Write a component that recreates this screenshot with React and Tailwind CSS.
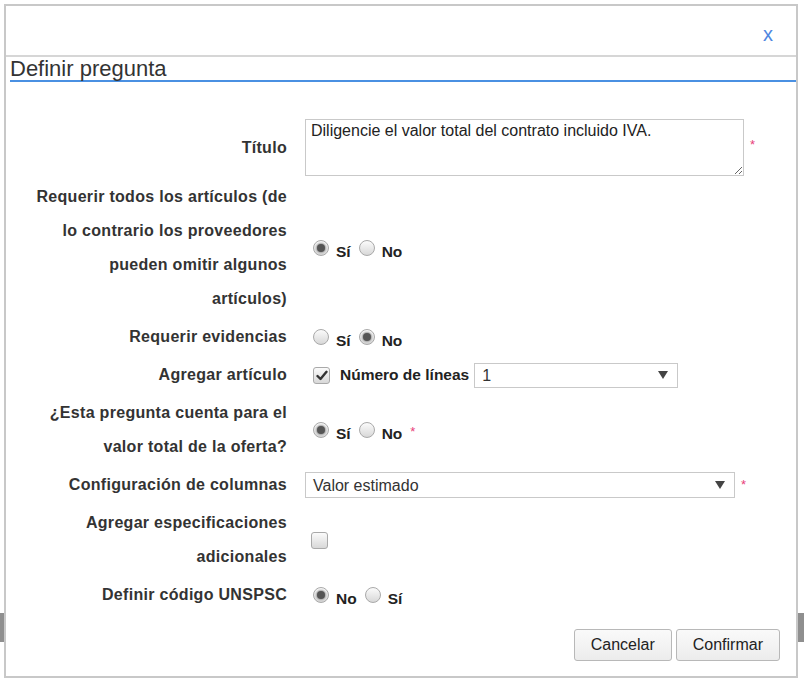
import React from 'react';

const font = "font-['Liberation_Sans',Arial,sans-serif]";

function Radio({ checked }) {
    return (
        <span className="w-[16px] h-[16px] shrink-0 rounded-full border border-[#a9a9a9] bg-linear-to-b from-[#fbfbfb] to-[#d8d8d8] flex items-center justify-center">
            {checked && <span className="w-[8px] h-[8px] rounded-full bg-[#555] shadow-[0_0_2px_1px_#9a9a9a]" />}
        </span>
    );
}

function Checkbox({ checked }) {
    return (
        <span className="w-[17px] h-[17px] shrink-0 rounded-[3px] border border-[#a9a9a9] bg-linear-to-b from-[#fbfbfb] to-[#d8d8d8] flex items-center justify-center">
            {checked && (
                <svg width="12" height="11" viewBox="0 0 12 11">
                    <path d="M1.5 6 L4.5 9 L10.5 1.8" fill="none" stroke="#333" strokeWidth="2.4" strokeLinecap="round" strokeLinejoin="round" />
                </svg>
            )}
        </span>
    );
}

function Required({ className = '' }) {
    return <span className={`text-[#e8407a] text-[13px] leading-none ${className}`}>*</span>;
}

function Choices({ options, value, required }) {
    return (
        <div className="flex items-center ml-[8px]">
            {options.map((o) => (
                <React.Fragment key={o}>
                    <Radio checked={o === value} />
                    <span className="ml-[7px] mr-[8px] mt-[7px] font-bold text-[15.5px] text-[#222]">{o}</span>
                </React.Fragment>
            ))}
            {required && <Required className="mt-[2px]" />}
        </div>
    );
}

function Select({ value, width, height }) {
    return (
        <div className={`flex items-center justify-between border border-[#c9c9c9] bg-white pl-[7px] pr-[9px] ${width} ${height}`}>
            <span className="text-[16px] text-[#333] mt-[2px]">{value}</span>
            <svg width="10" height="8" viewBox="0 0 10 8">
                <path d="M0 0 H10 L5 8 Z" fill="#444" />
            </svg>
        </div>
    );
}

function Label({ children }) {
    return (
        <div className="text-right font-bold text-[16px] tracking-[0.3px] leading-[34px] text-[#333] flex flex-col justify-center">
            {children}
        </div>
    );
}

export default function App() {
    return (
        <div className={`relative w-[804px] h-[683px] bg-white overflow-hidden ${font}`}>
            {/* page behind the dialog */}
            <div className="absolute left-0 top-[613px] w-[5px] h-[29px] bg-[#8f8f8f]" />
            <div className="absolute right-0 top-[613px] w-[7px] h-[29px] bg-[#8f8f8f]" />

            <div className="relative ml-[4px] mt-[4px] w-[794px] h-[674px] border-2 border-[#c8c8c8] bg-white flex flex-col">
                {/* header */}
                <div className="h-[49px] flex items-center justify-end pr-[23px] pt-[6px]">
                    <span className="text-[20px] text-[#4f86df] leading-none">x</span>
                </div>
                <div className="h-[2px] bg-[#d6d6d6]" />

                <div className="ml-[4px] mt-[1px] border-b-2 border-[#4a90e2]">
                    <h2 className="text-[22px] leading-[22px] text-[#333]">Definir pregunta</h2>
                </div>

                {/* form */}
                <div className="grid grid-cols-[281px_1fr] gap-x-[18px] gap-y-[4px] pt-[37px]">
                    <Label>Título</Label>
                    <div className="flex items-center">
                        <textarea
                            readOnly
                            defaultValue="Diligencie el valor total del contrato incluido IVA."
                            className="w-[439px] h-[57px] border border-[#c9c9c9] px-[5px] pt-[2px] text-[16px] leading-[18px] text-[#222] outline-none"
                        />
                        <Required className="ml-[6px] -mt-[6px]" />
                    </div>

                    <Label>
                        Requerir todos los artículos (de<br />
                        lo contrario los proveedores<br />
                        pueden omitir algunos<br />
                        artículos)
                    </Label>
                    <div className="flex items-center">
                        <Choices options={['Sí', 'No']} value="Sí" />
                    </div>

                    <Label>Requerir evidencias</Label>
                    <div className="flex items-center">
                        <Choices options={['Sí', 'No']} value="No" />
                    </div>

                    <Label>Agregar artículo</Label>
                    <div className="flex items-center">
                        <span className="ml-[8px]"><Checkbox checked /></span>
                        <span className="ml-[10px] mr-[5px] font-bold text-[15.5px] text-[#222]">Número de líneas</span>
                        <Select value="1" width="w-[204px]" height="h-[25px]" />
                    </div>

                    <Label>
                        ¿Esta pregunta cuenta para el<br />
                        valor total de la oferta?
                    </Label>
                    <div className="flex items-center">
                        <Choices options={['Sí', 'No']} value="Sí" required />
                    </div>

                    <Label>Configuración de columnas</Label>
                    <div className="flex items-center">
                        <Select value="Valor estimado" width="w-[430px]" height="h-[26px]" />
                        <Required className="ml-[6px] -mt-[2px]" />
                    </div>

                    <Label>
                        Agregar especificaciones<br />
                        adicionales
                    </Label>
                    <div className="flex items-center">
                        <span className="ml-[6px]"><Checkbox /></span>
                    </div>

                    <Label>Definir código UNSPSC</Label>
                    <div className="flex items-center">
                        <Choices options={['No', 'Sí']} value="No" />
                    </div>
                </div>

                {/* footer */}
                <div className="flex justify-end gap-[4px] pr-[16px] mt-[17px]">
                    <button className="h-[32px] px-[16px] border border-[#b8b8b8] rounded-[3px] bg-linear-to-b from-[#fafafa] to-[#ececec] text-[16px] text-[#222]">Cancelar</button>
                    <button className="h-[32px] px-[16px] border border-[#b8b8b8] rounded-[3px] bg-linear-to-b from-[#fafafa] to-[#ececec] text-[16px] text-[#222]">Confirmar</button>
                </div>
            </div>
        </div>
    );
}
